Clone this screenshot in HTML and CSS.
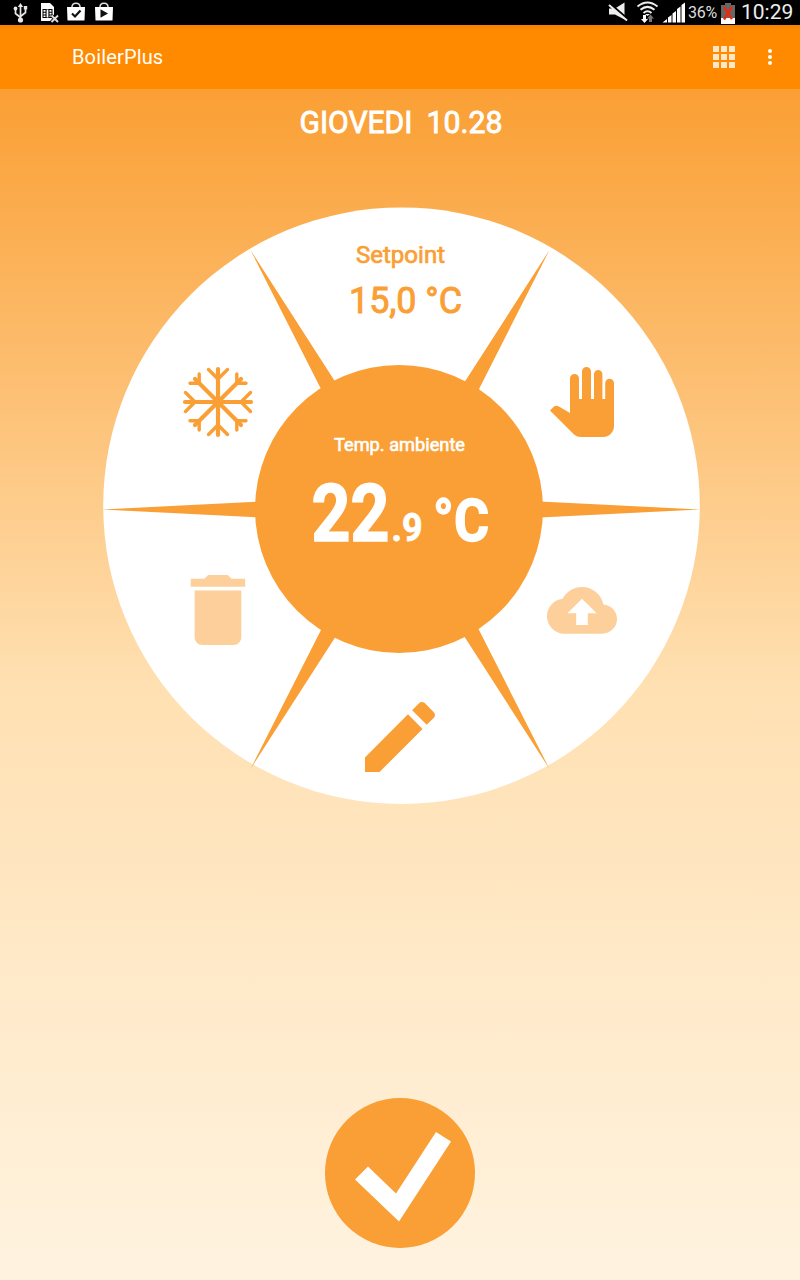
FILE: index.html
```html
<!DOCTYPE html>
<html lang="it">
<head>
  <meta charset="UTF-8">
  <title>BoilerPlus</title>
  <link rel="stylesheet" href="styles.css">
</head>
<body>
  <div class="status-bar">
    <svg class="status-left" width="120" height="25" viewBox="0 0 120 25">
      <!-- usb -->
      <g fill="none" stroke="#e8e8e8" stroke-width="1.7">
        <path d="M20.500 5v15M15.500 9v4.500l5 4M25.500 8v4.500l-5 4"/>
      </g>
      <path d="M20.500 3l2.700 4h-5.400zM23.800 6h3.400v3.400h-3.400z" fill="#e8e8e8"/>
      <circle cx="15.500" cy="8.500" r="1.900" fill="#e8e8e8"/>
      <circle cx="20.500" cy="20" r="2.600" fill="#e8e8e8"/>
      <!-- sim -->
      <path d="M41 3h9l4 4v14H41z" fill="#fff"/>
      <path d="M42.500 9h10v9h-10z" fill="#000"/>
      <path d="M43.500 10h2v1.800h-2zM43.500 12.800h2v1.800h-2zM43.500 15.500h2v1.500h-2zM49.500 10h2v1.800h-2zM49.500 12.800h2v1.800h-2zM49.500 15.500h2v1.500h-2zM46.600 9.500h1.800v8h-1.800z" fill="#fff"/>
      <path d="M51.500 15.500l6.500 6.500M58 15.500l-6.500 6.500" stroke="#000" stroke-width="3.600"/>
      <path d="M51.500 15.500l6.500 6.500M58 15.500l-6.500 6.500" stroke="#ddd" stroke-width="1.900"/>
      <!-- shopping bags -->
      <path d="M67 7h18l-.5 13.500H67.500zM95 7h18l-.5 13.500H95.500z" fill="#fff"/>
      <path d="M72 7c0-5 8-5 8 0M100 7c0-5 8-5 8 0" fill="none" stroke="#ddd" stroke-width="1.500"/>
      <path d="M72 13.500l3 3 5.500-6" fill="none" stroke="#111" stroke-width="2.200"/>
      <path d="M100.500 9.300v8.400l7.500-4.200z" fill="#111"/>
    </svg>
    <div class="status-right">
      <svg width="80" height="25" viewBox="607 0 80 25">
        <!-- muted -->
        <path d="M609 8.500h6l9.500-6v17l-9.500-5h-6z" fill="#eee"/>
        <path d="M610.500 4.500l17 14.500" stroke="#000" stroke-width="2.600"/>
        <path d="M609 5l18 15.500" stroke="#eee" stroke-width="1.900"/>
        <!-- wifi -->
        <g fill="none" stroke="#eee" stroke-width="2">
          <path d="M637.500 6.500q10-8 20 0M640.500 9.800q7-5.800 14 0M643.500 13q4-3.400 8 0"/>
        </g>
        <path d="M645 14h5l-2.500 2z" fill="#eee"/>
        <path d="M643 15h3v4h2l-3.500 4-3.500-4h2z" fill="#fff"/>
        <path d="M649 22v-3.500h-2l3.500-4 3.500 4h-2V22z" fill="#777"/>
        <!-- signal -->
        <path d="M662.500 22.500l4.500-3.500v3.500zM668 17.500l3.500-2.500v7.500H668zM672.500 13.500l3.500-2.500v11.500h-3.500zM677 9l3.500-2.500v16H677zM681.500 5l3.500-2.500v20h-3.500z" fill="#fff"/>
      </svg>
      <span class="battery-level">36%</span>
      <svg class="battery" width="14" height="22" viewBox="0 0 14 22">
        <path d="M0 3h4V1h6v2h4v13H0z" fill="#666"/>
        <path d="M0 16h14v6H0z" fill="#fff"/>
        <path d="M3 5l8 12M11 5L3 17.500" stroke="#e62b13" stroke-width="2.400"/>
      </svg>
      <span class="clock">10:29</span>
    </div>
  </div>

  <div class="toolbar">
    <h1>BoilerPlus</h1>
    <svg class="grid-icon" width="22" height="22" viewBox="0 0 22 22" fill="#ffe6c4">
      <path d="M0 0h6v6H0zM8 0h6v6H8zM16 0h6v6h-6zM0 8h6v6H0zM8 8h6v6H8zM16 8h6v6h-6zM0 16h6v6H0zM8 16h6v6H8zM16 16h6v6h-6z"/>
    </svg>
    <svg class="more-icon" width="4" height="16" viewBox="0 0 4 16" fill="#fff">
      <circle cx="2" cy="2" r="2"/><circle cx="2" cy="8" r="2"/><circle cx="2" cy="14" r="2"/>
    </svg>
  </div>

  <div class="content">
    <svg class="date" width="220" height="40" viewBox="290 102 220 40">
      <text x="299.500" y="132.500" textLength="113" lengthAdjust="spacingAndGlyphs">GIOVEDI</text>
      <text x="426.500" y="132.500" textLength="76" lengthAdjust="spacingAndGlyphs">10.28</text>
    </svg>

    <svg class="dial" width="600" height="600" viewBox="100 205 600 600">
      <circle cx="401.500" cy="505.700" r="298.300" fill="#fff"/>
      <!-- spokes -->
      <g class="orange">
        <path d="M102 509.500L260 501.500v16zM701 509.500L540 501.500v16z"/>
        <path d="M250.500 250L336 383l-14 8zM549.500 250L464 383l14 8z"/>
        <path d="M250.500 769L336 636l-14-8zM549.500 769L464 636l14-8z"/>
        <circle cx="399" cy="509" r="144"/>
      </g>

      <text class="setpoint-label" x="356" y="262.500" textLength="89" lengthAdjust="spacingAndGlyphs">Setpoint</text>
      <text class="setpoint-value" x="349" y="312.500" textLength="113" lengthAdjust="spacingAndGlyphs">15,0 °C</text>

      <text class="room-label" x="334" y="450.500" textLength="131" lengthAdjust="spacingAndGlyphs">Temp. ambiente</text>
      <text class="room-int" x="311.500" y="541" textLength="78" lengthAdjust="spacingAndGlyphs">22</text>
      <text class="room-dec" x="391.500" y="541" textLength="31" lengthAdjust="spacingAndGlyphs">.9</text>
      <text class="room-unit" x="433" y="541" textLength="56" lengthAdjust="spacingAndGlyphs">°C</text>

      <!-- snowflake -->
      <g transform="translate(218 402)" class="flake">
        <path stroke-width="4.200" d="M0-33V33M-33 0H33M-23-23L23 23M23-23L-23 23"/>
        <path stroke-width="3.400" d="M-9.500-32.500L0-23 9.500-32.500M-9.500 32.500L0 23 9.500 32.500M-32.500-9.500L-23 0-32.500 9.500M32.500-9.500L23 0 32.500 9.500"/>
        <path stroke-width="3.400" d="M-28-18.800h9.200V-28M28-18.800h-9.200V-28M-28 18.800h9.200V28M28 18.800h-9.200V28"/>
      </g>

      <!-- hand -->
      <path class="orange" d="M570 413V378.500a4.500 4.500 0 0 1 9 0V399h3V371.500a4.500 4.500 0 0 1 9 0V399h3V374.300a4.200 4.200 0 0 1 8.400 0V399h2.800V383.200a4.400 4.400 0 0 1 8.800 0V426a11 11 0 0 1-11 11H581q-4 0-7-2.500L550 410.500l4-4q2-1.500 4.500-.3z"/>

      <!-- bin -->
      <path class="pale" transform="translate(171.300 563.300) scale(3.889)" d="M6 19c0 1.100.9 2 2 2h8c1.100 0 2-.9 2-2V7H6v12zM19 4h-3.500l-1-1h-5l-1 1H5v2h14V4z"/>

      <!-- cloud upload -->
      <path class="pale" transform="translate(547 575.300) scale(2.917)" d="M19.350 10.040C18.670 6.590 15.640 4 12 4 9.110 4 6.600 5.640 5.350 8.040 2.340 8.360 0 10.910 0 14c0 3.310 2.690 6 6 6h13c2.760 0 5-2.240 5-5 0-2.640-2.050-4.780-4.650-4.960zM14 13v4h-4v-4H7l5-5 5 5h-3z"/>

      <!-- pencil -->
      <path class="orange" transform="translate(353.300 690.300) scale(3.889)" d="M3 17.250V21h3.750L17.810 9.940l-3.750-3.750L3 17.250zM20.710 7.040c.39-.39.39-1.020 0-1.410l-2.340-2.340c-.39-.39-1.020-.39-1.410 0l-1.830 1.830 3.750 3.750 1.830-1.830z"/>
    </svg>

    <svg class="confirm" width="150" height="150" viewBox="325 1098 150 150">
      <circle class="orange" cx="400" cy="1173" r="75"/>
      <path d="M355 1179.500l13-13 28 27 40-61.500 15 9.500-52 80z" fill="#fff"/>
    </svg>
  </div>
</body>
</html>
```

FILE: styles.css
```css
body {
  margin: 0;
  height: 1280px;
  display: flex;
  flex-direction: column;
  overflow: hidden;
  font-family: Roboto, sans-serif;
  color: #fff;
}
.status-bar {
  height: 25px;
  background-color: #000;
  display: flex;
  justify-content: space-between;
}
.status-right {
  display: flex;
  align-items: center;
  width: 193px;
}
.battery-level {
  font-size: 16px;
  width: 33px;
  margin-left: 1px;
  color: #ddd;
  letter-spacing: -0.3px;
}
.clock {
  font-size: 21px;
  line-height: 25px;
  margin-left: 6px;
  margin-top: -1px;
  color: #eee;
}
.battery {
  flex: none;
}
.toolbar {
  height: 64px;
  background: linear-gradient(#f58200, #ff8a00 5px);
  display: flex;
  align-items: center;
  padding: 0 28px 0 72px;
}
.toolbar h1 {
  font-size: 20px;
  font-weight: 400;
  letter-spacing: 0.15px;
  margin: 0;
  flex: 1;
}
.more-icon {
  margin-left: 33px;
}
.content {
  flex: 1;
  display: flex;
  flex-direction: column;
  align-items: center;
  padding-top: 13px;
  background: linear-gradient(#fa9f34, #ffe0b2 50%, #fff3e0);
}
.date {
  font-size: 31px;
  fill: #fff;
  stroke: #fff;
  stroke-width: 0.9px;
}
.dial {
  margin-top: 63px;
}
.confirm {
  margin-top: 293px;
}
.orange {
  fill: #fa9f35;
}
.pale {
  fill: #fdcf9a;
}
.flake {
  fill: none;
  stroke: #fa9f35;
  stroke-linecap: round;
}
.setpoint-label,
.setpoint-value {
  fill: #fa9f35;
  stroke: #fa9f35;
}
.setpoint-label {
  font-size: 24px;
  stroke-width: 0.7px;
}
.setpoint-value {
  font-size: 37px;
  stroke-width: 1px;
}
.room-label {
  font-size: 18px;
  fill: #fff;
  stroke: #fff;
  stroke-width: 0.6px;
}
.room-int,
.room-dec,
.room-unit {
  font-weight: 700;
  fill: #fff;
  stroke: #fff;
}
.room-int {
  font-size: 80px;
  stroke-width: 1.6px;
}
.room-dec {
  font-size: 39px;
  stroke-width: 0.8px;
}
.room-unit {
  font-size: 59px;
  stroke-width: 1.4px;
}
```
